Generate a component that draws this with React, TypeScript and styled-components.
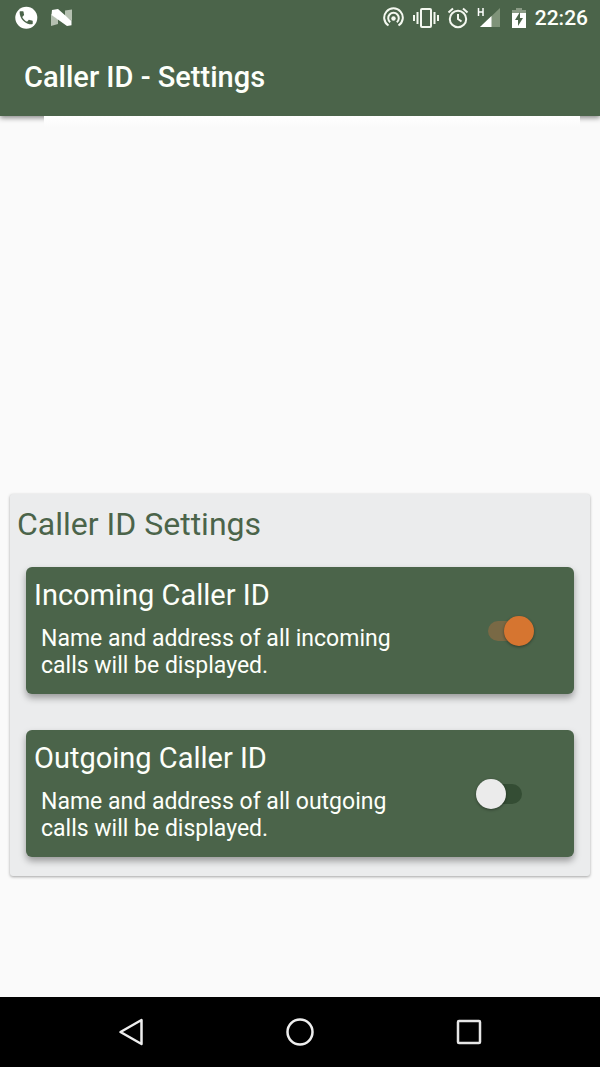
import React, { useState } from "react";
import styled, { createGlobalStyle } from "styled-components";

const GlobalStyle = createGlobalStyle`
  * { box-sizing: border-box; }
  body { margin: 0; background: #fafafa; font-family: Roboto, "Noto Sans", sans-serif; }
`;

const green = "#4b644a";

const Screen = styled.div`
  display: flex;
  flex-direction: column;
  min-height: 100vh;
`;

const Header = styled.header`
  position: relative;
  z-index: 1;
  background: ${green};
  color: #fdfffa;
  box-shadow: 0 2px 5px rgba(0, 0, 0, 0.45);
`;

const StatusBar = styled.div`
  display: flex;
  align-items: center;
  justify-content: space-between;
  height: 36px;
  padding: 0 12px 0 14px;
`;

const StatusGroup = styled.div<{ $gap: number }>`
  display: flex;
  align-items: center;
  gap: ${(p) => p.$gap}px;
  svg { display: block; }
`;

const Clock = styled.span`
  font-size: 21px;
  font-weight: 500;
  line-height: 24px;
`;

const AppTitle = styled.h1`
  margin: 0;
  padding: 25px 24px 23px;
  font-size: 29px;
  font-weight: 500;
  line-height: 32px;
`;

const Main = styled.main`
  flex: 1;
  display: flex;
  flex-direction: column;
  justify-content: space-between;
  padding-bottom: 121px;
`;

const Banner = styled.div`
  position: relative;
  z-index: 2;
  height: 12px;
  margin: 0 20px 0 44px;
  background: linear-gradient(#ffffff, #fafafa);
`;

const Panel = styled.section`
  margin: 0 10px;
  padding: 11px 16px 19px;
  border-radius: 3px;
  background: #ebeced;
  box-shadow: 0 1px 3px rgba(0, 0, 0, 0.35);
`;

const PanelTitle = styled.h2`
  margin: 0 -9px 24px;
  color: ${green};
  font-size: 32px;
  font-weight: 400;
  line-height: 38px;
`;

const CardList = styled.div`
  display: flex;
  flex-direction: column;
  gap: 36px;
`;

const Card = styled.div`
  display: flex;
  align-items: center;
  justify-content: space-between;
  padding: 10px 40px 15px 8px;
  border-radius: 6px;
  background: ${green};
  color: #fdfffa;
  box-shadow: 0 4px 7px rgba(0, 0, 0, 0.35);
`;

const CardTitle = styled.label`
  display: block;
  font-size: 29px;
  line-height: 36px;
`;

const CardText = styled.p`
  max-width: 372px;
  margin: 12px 0 0 7px;
  font-size: 23px;
  line-height: 27px;
`;

const Switch = styled.input`
  appearance: none;
  position: relative;
  flex: none;
  width: 58px;
  height: 30px;
  margin: 6px 0 0;
  cursor: pointer;

  &::before {
    content: "";
    position: absolute;
    inset: 5px 12px;
    border-radius: 10px;
    background: #344d34;
  }
  &::after {
    content: "";
    position: absolute;
    top: 0;
    left: 0;
    width: 30px;
    height: 30px;
    border-radius: 50%;
    background: #ebebeb;
    box-shadow: 0 1px 3px rgba(0, 0, 0, 0.4);
  }
  &:checked::before { background: #796945; }
  &:checked::after { left: 28px; background: #d67530; }
`;

const NavBar = styled.nav`
  display: flex;
  justify-content: center;
  gap: 121px;
  height: 70px;
  background: #000;
`;

const NavButton = styled.button`
  display: flex;
  align-items: center;
  justify-content: center;
  width: 48px;
  padding: 0;
  border: 0;
  background: none;
`;

type SettingProps = { id: string; title: string; text: string; initial: boolean };

function Setting({ id, title, text, initial }: SettingProps) {
  const [on, setOn] = useState(initial);
  return (
    <Card>
      <div>
        <CardTitle htmlFor={id}>{title}</CardTitle>
        <CardText>{text}</CardText>
      </div>
      <Switch id={id} type="checkbox" role="switch" checked={on} onChange={() => setOn(!on)} />
    </Card>
  );
}

export default function App() {
  return (
    <Screen>
      <GlobalStyle />
      <Header>
        <StatusBar>
          <StatusGroup $gap={12}>
            <svg width="24" height="24" viewBox="0 0 24 24">
              <circle cx="12.3" cy="11.7" r="11" fill="#fff" />
              <path transform="translate(3.4 3) scale(.73)" fill={green} d="M6.600 10.800c1.400 2.800 3.800 5.100 6.600 6.600l2.200-2.200c.3-.3.7-.4 1-.2 1.100.4 2.300.6 3.600.6.6 0 1 .4 1 1V20c0 .6-.4 1-1 1C10.600 21 3 13.400 3 4c0-.6.4-1 1-1h3.500c.6 0 1 .4 1 1 0 1.300.2 2.500.6 3.600.1.400 0 .700-.200 1z" />
            </svg>
            <svg width="24" height="24" viewBox="0 0 24 24">
              <path fill="#b5c0b1" d="M1 8l7 5v5l-7 2zM15 4.500l7-1V15l-7-5z" />
              <path fill="#fff" d="M2 4l6-1 13.500 12v4.300L17 20 1.500 9z" />
            </svg>
          </StatusGroup>
          <StatusGroup $gap={8}>
            <svg width="22" height="22" viewBox="0 0 22 22" fill="none" stroke="#f4f8f0" strokeWidth="2">
              <path d="M5.500 18.500a9.300 9.300 0 1 1 10 0" />
              <path d="M7.200 15.200a5.300 5.300 0 1 1 6.600 0" />
              <circle cx="10.500" cy="11.500" r="2.200" fill="#f4f8f0" stroke="none" />
            </svg>
            <svg width="26" height="22" viewBox="0 0 26 22" fill="none" stroke="#f4f8f0" strokeWidth="2">
              <rect x="8" y="2" width="10" height="18" rx="1" />
              <path d="M4.500 5v12M21.500 5v12M1 8v6M25 8v6" />
            </svg>
            <svg width="22" height="22" viewBox="0 0 22 22" fill="none" stroke="#f4f8f0" strokeWidth="2">
              <circle cx="11" cy="12" r="8.200" />
              <path d="M11 7v5l3.500 2.500M1.500 5.500l4.500-4M20.500 5.500L16 1.500" />
            </svg>
            <svg width="26" height="24" viewBox="0 0 26 24">
              <path fill="#7f9379" d="M23 2v19H3z" />
              <path fill="#fff" d="M14.500 10v11H3z" />
              <path fill="none" stroke="#fff" strokeWidth="1.500" d="M1.500 2v8M6 2v8M1.500 6H6" />
            </svg>
            <svg width="16" height="22" viewBox="0 0 16 22">
              <path fill="#8b9b86" d="M1 7V3h4V1h6v2h4v4z" />
              <path fill="#fff" d="M1 6h14v15H1z" />
              <path fill={green} d="M9 5v6h3l-5 8v-6H4z" />
            </svg>
            <Clock>22:26</Clock>
          </StatusGroup>
        </StatusBar>
        <AppTitle>Caller ID - Settings</AppTitle>
      </Header>
      <Main>
        <Banner />
        <Panel>
          <PanelTitle>Caller ID Settings</PanelTitle>
          <CardList>
            <Setting id="incoming" title="Incoming Caller ID" text="Name and address of all incoming calls will be displayed." initial />
            <Setting id="outgoing" title="Outgoing Caller ID" text="Name and address of all outgoing calls will be displayed." initial={false} />
          </CardList>
        </Panel>
      </Main>
      <NavBar>
        <NavButton aria-label="Back">
          <svg width="28" height="28" viewBox="0 0 28 28" fill="none" stroke="#eee" strokeWidth="2.500" strokeLinejoin="round">
            <path d="M24.500 2v24L3.500 14z" />
          </svg>
        </NavButton>
        <NavButton aria-label="Home">
          <svg width="28" height="28" viewBox="0 0 28 28" fill="none" stroke="#eee" strokeWidth="2.500">
            <circle cx="14" cy="14" r="12.500" />
          </svg>
        </NavButton>
        <NavButton aria-label="Recent apps">
          <svg width="28" height="28" viewBox="0 0 28 28" fill="none" stroke="#e6e6e6" strokeWidth="2.500">
            <rect x="3" y="3" width="22" height="22" rx="1" />
          </svg>
        </NavButton>
      </NavBar>
    </Screen>
  );
}
